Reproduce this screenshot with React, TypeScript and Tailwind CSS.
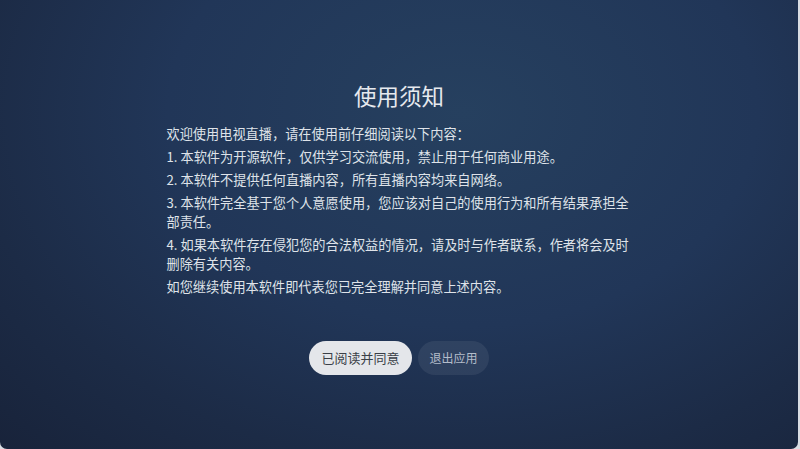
import React from "react";

const font = { fontFamily: '"Noto Sans CJK SC", "Noto Sans", sans-serif' };

export default function App() {
  const paras = [
    "欢迎使用电视直播，请在使用前仔细阅读以下内容：",
    "1. 本软件为开源软件，仅供学习交流使用，禁止用于任何商业用途。",
    "2. 本软件不提供任何直播内容，所有直播内容均来自网络。",
    "3. 本软件完全基于您个人意愿使用，您应该对自己的使用行为和所有结果承担全部责任。",
    "4. 如果本软件存在侵犯您的合法权益的情况，请及时与作者联系，作者将会及时删除有关内容。",
    "如您继续使用本软件即代表您已完全理解并同意上述内容。",
  ];
  return (
    <div className="w-[800px] h-[449px] bg-[#d9dde3] pr-[2px] overflow-hidden" style={font}>
      <div className="h-full w-full rounded-b-[7px] bg-[radial-gradient(ellipse_farthest-corner_at_58%_25%,#26405f_0%,#213658_45%,#1c2b46_75%,#18233a_100%)] flex flex-col items-center pt-[80px]">
        <h1 className="text-[22.5px] leading-[30px] text-[#e6e9ee] font-normal">使用须知</h1>
        <div className="w-[470px] ml-[5px] mt-[14px] flex flex-col gap-[4px] text-[13.2px] leading-[19px] text-[#dfe3e9]">
          {paras.map((p) => (
            <p key={p}>{p}</p>
          ))}
        </div>
        <div className="mt-[45px] flex gap-[6px]">
          <button className="h-[34px] w-[103px] rounded-full bg-[#e4e6ea] text-[13px] text-[#3a3f47]">已阅读并同意</button>
          <button className="h-[34px] w-[71px] rounded-full bg-[#ffffff12] text-[12px] text-[#b4bdca]">退出应用</button>
        </div>
      </div>
    </div>
  );
}
